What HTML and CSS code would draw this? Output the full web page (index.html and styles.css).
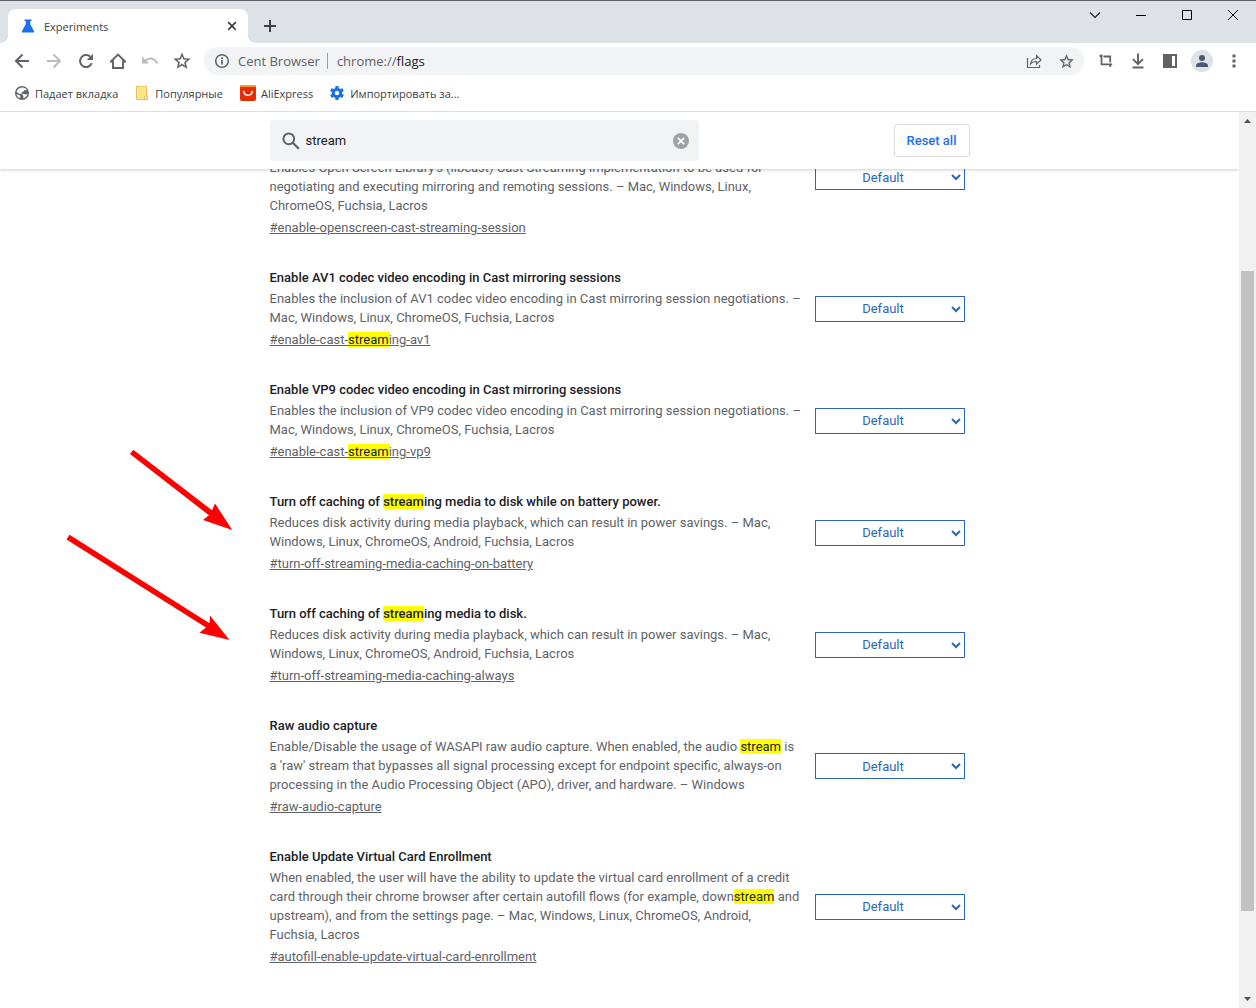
FILE: index.html
```html
<!DOCTYPE html>
<html lang="en">
<head>
  <meta charset="UTF-8"/>
  <meta name="viewport" content="width=device-width,initial-scale=1"/>
  <title>Experiments</title>
  <link rel="stylesheet" href="styles.css">
</head>
<body>
  <div class="tab-strip">
    <div class="tab">
      <svg class="tab-icon" width="14" height="14" viewBox="0 0 14 14"><path d="M3.5 0.500h7v1.500h-1.200v3.200L13 12v1.500H1V12l3.700-6.800V2H3.500z" fill="#1a73e8"/></svg>
      <span class="tab-title">Experiments</span>
      <button class="tab-close" aria-label="Close tab"><svg width="10" height="10" viewBox="0 0 10 10"><path d="M1.200 1.200l7.600 7.600M8.800 1.200L1.200 8.800" stroke="#3c4043" stroke-width="1.700"/></svg></button>
    </div>
    <button class="new-tab" aria-label="New tab"><svg width="14" height="14" viewBox="0 0 14 14"><path d="M7 1v12M1 7h12" stroke="#3c4043" stroke-width="2"/></svg></button>
    <div class="window-controls">
      <button aria-label="Search tabs"><svg width="12" height="12" viewBox="0 0 12 12"><path d="M1 3.500l5 5 5-5" fill="none" stroke="#222" stroke-width="1.200"/></svg></button>
      <button aria-label="Minimize"><svg width="10" height="10" viewBox="0 0 10 10"><path d="M0 5.500h10" stroke="#000"/></svg></button>
      <button aria-label="Maximize"><svg width="10" height="10" viewBox="0 0 10 10"><path d="M.5.5h9v9h-9z" fill="none" stroke="#000"/></svg></button>
      <button aria-label="Close"><svg width="10" height="10" viewBox="0 0 10 10"><path d="M0 0l10 10M10 0L0 10" stroke="#000"/></svg></button>
    </div>
  </div>

  <div class="toolbar">
    <button aria-label="Back"><svg width="16" height="16" viewBox="0 0 16 16"><path d="M15 8H2M8.500 1.500L2 8l6.500 6.500" fill="none" stroke="currentColor" stroke-width="2"/></svg></button>
    <button aria-label="Forward" disabled><svg width="16" height="16" viewBox="0 0 16 16"><path d="M1 8h13M7.500 1.500L14 8l-6.500 6.500" fill="none" stroke="currentColor" stroke-width="2"/></svg></button>
    <button aria-label="Reload"><svg width="16" height="16" viewBox="0 0 16 16"><path d="M13.700 10.200A6 6 0 1 1 12.300 3.800" fill="none" stroke="currentColor" stroke-width="2"/><path d="M15 .800v6.200H8.800z" fill="currentColor"/></svg></button>
    <button aria-label="Home"><svg width="16" height="16" viewBox="0 0 16 16"><path d="M3 15V8.500H.8L8 1.500l7.200 7H13V15z" fill="none" stroke="currentColor" stroke-width="1.900"/></svg></button>
    <button aria-label="Undo" disabled><svg width="18" height="16" viewBox="0 0 18 16"><path d="M1 3.500v7h7z" fill="currentColor"/><path d="M3.500 8.500Q10.500 1.500 16.500 10.500" fill="none" stroke="currentColor" stroke-width="2"/></svg></button>
    <button aria-label="Bookmarks"><svg width="20" height="20" viewBox="0 0 24 24"><path d="M22 9.240l-7.190-.62L12 2 9.190 8.630 2 9.240l5.460 4.730L5.820 21 12 17.270 18.180 21l-1.630-7.030L22 9.240zM12 15.400l-3.760 2.270 1-4.280-3.320-2.880 4.380-.38L12 6.100l1.710 4.040 4.380.38-3.320 2.880 1 4.280L12 15.400z" fill="currentColor" stroke="currentColor" stroke-width=".300"/></svg></button>
    <div class="omnibox">
      <svg class="info" width="16" height="16" viewBox="0 0 16 16"><circle cx="8" cy="8" r="6.300" fill="none" stroke="#5f6368" stroke-width="1.500"/><path d="M8 7v4.500M8 4.200v1.700" stroke="#5f6368" stroke-width="1.700"/></svg>
      <span class="origin">Cent Browser</span>
      <span class="url">chrome://<b>flags</b></span>
      <button aria-label="Share"><svg width="16" height="16" viewBox="0 0 16 16"><path d="M1.500 5v9.500h12V12M4.500 11c.5-4 3-5.500 6-5.500V2.500L15 7l-4.500 4.200V8.500c-2.500 0-4.500.5-6 2.500z" fill="none" stroke="currentColor" stroke-width="1.200"/></svg></button>
      <button aria-label="Bookmark this page"><svg width="17" height="17" viewBox="0 0 24 24"><path d="M22 9.240l-7.190-.62L12 2 9.190 8.630 2 9.240l5.460 4.730L5.820 21 12 17.270 18.180 21l-1.630-7.030L22 9.240zM12 15.400l-3.760 2.270 1-4.280-3.320-2.880 4.380-.38L12 6.100l1.710 4.040 4.380.38-3.320 2.880 1 4.280L12 15.400z" fill="currentColor" stroke="currentColor" stroke-width=".300"/></svg></button>
    </div>
    <button aria-label="Screenshot"><svg width="16" height="16" viewBox="0 0 16 16"><path d="M1.500 3H4M3.500 1.500v9.800h10.700M5.500 3.500h6.700v6M12.200 10.500V14" fill="none" stroke="currentColor" stroke-width="1.800"/></svg></button>
    <button aria-label="Downloads"><svg width="14" height="16" viewBox="0 0 14 16"><path d="M7 .5V11M2 6.200l5 5 5-5M1.500 14.500h11" fill="none" stroke="currentColor" stroke-width="1.900"/></svg></button>
    <button aria-label="Side panel"><svg width="14" height="14" viewBox="0 0 14 14"><path d="M0 0h14v14H0zM9 2v10h3V2z" fill="currentColor" fill-rule="evenodd"/></svg></button>
    <button aria-label="Profile"><svg width="22" height="22" viewBox="0 0 22 22"><circle cx="11" cy="11" r="11" fill="#dee1e6"/><circle cx="11" cy="8" r="3" fill="#4a5872"/><path d="M5 17v-1.500c0-2 4-3.200 6-3.200s6 1.200 6 3.200V17z" fill="#4a5872"/></svg></button>
    <button aria-label="Menu"><svg width="4" height="14" viewBox="0 0 4 14"><path d="M.5.500h3v3h-3zM.5 5.500h3v3h-3zM.5 10.500h3v3h-3z" fill="currentColor"/></svg></button>
  </div>

  <nav class="bookmarks">
    <a href="#"><svg width="14" height="14" viewBox="0 0 14 14"><circle cx="7" cy="7" r="7" fill="#5f6368"/><path d="M7.500 1.500c2 0 3.600 1 4.500 2.700L9.500 4 8.500 5.500 6.500 6l.5 1.500-2 .5-3.500-2C2 3.500 4.500 1.500 7.500 1.500zM1.600 8l3 1.200.8 1.300-.4 1.800C3 11.500 1.800 10 1.600 8zM8 7.500l2.500 1 1.900-.5c-.3 2.200-2 4-4.200 4.400L8.500 10 7.200 8.800z" fill="#fff"/></svg>Падает вкладка</a>
    <a href="#"><svg width="14" height="14" viewBox="0 0 14 14"><path d="M1.500.500h10v9h1v4h-11z" fill="#fde38b" stroke="#e6c35c"/><path d="M9.500 13.500v-3l2-1" fill="none" stroke="#e6c35c"/></svg>Популярные</a>
    <a href="#" class="ali"><svg width="16" height="16" viewBox="0 0 16 16"><rect width="16" height="16" rx="2" fill="#e62e04"/><path d="M0 2a2 2 0 0 1 2-2h12a2 2 0 0 1 2 2z" fill="#ff9a1c"/><path d="M3.800 6.500c.5 5 7.900 5 8.400 0" fill="none" stroke="#fff" stroke-width="1.500" stroke-linecap="round"/></svg>AliExpress</a>
    <a href="#"><svg width="14" height="14" viewBox="0 0 14 14"><circle cx="7" cy="7" r="3.700" fill="none" stroke="#1a73e8" stroke-width="3"/><path d="M7 0v3M7 11v3M.94 3.500l2.600 1.500M10.460 9l2.600 1.500M.94 10.500L3.540 9M10.460 5l2.600-1.500" stroke="#1a73e8" stroke-width="3.200"/></svg>Импортировать за...</a>
  </nav>

  <div class="viewport">
    <main>
      <header>
        <div class="container header-row">
          <div class="search">
            <svg width="18" height="18" viewBox="0 0 18 18"><circle cx="6.800" cy="6.800" r="5.400" fill="none" stroke="#5f6368" stroke-width="2"/><path d="M10.800 10.800l6 6" stroke="#5f6368" stroke-width="2.300"/></svg>
            <input type="text" id="search" value="stream" aria-label="Search flags">
            <button aria-label="Clear search"><svg width="16" height="16" viewBox="0 0 16 16"><circle cx="8" cy="8" r="8" fill="#a0a2a5"/><path d="M4.800 4.800l6.400 6.400M11.200 4.800l-6.400 6.400" stroke="#fff" stroke-width="1.800"/></svg></button>
          </div>
          <button class="reset">Reset all</button>
        </div>
      </header>

      <div class="container experiments">
        <section class="experiment scrolled">
          <div class="flag">
            <p>Enables Open Screen Library's (libcast) Cast Streaming implementation to be used for negotiating and executing mirroring and remoting sessions. – Mac, Windows, Linux, ChromeOS, Fuchsia, Lacros</p>
            <a href="#enable-openscreen-cast-streaming-session">#enable-openscreen-cast-streaming-session</a>
          </div>
          <select aria-label="Open Screen Cast Streaming"><option>Default</option></select>
        </section>

        <section class="experiment">
          <div class="flag">
            <h3 id="av1">Enable AV1 codec video encoding in Cast mirroring sessions</h3>
            <p>Enables the inclusion of AV1 codec video encoding in Cast mirroring session negotiations. – Mac, Windows, Linux, ChromeOS, Fuchsia, Lacros</p>
            <a href="#enable-cast-streaming-av1">#enable-cast-<mark>stream</mark>ing-av1</a>
          </div>
          <select aria-labelledby="av1"><option>Default</option></select>
        </section>

        <section class="experiment">
          <div class="flag">
            <h3 id="vp9">Enable VP9 codec video encoding in Cast mirroring sessions</h3>
            <p>Enables the inclusion of VP9 codec video encoding in Cast mirroring session negotiations. – Mac, Windows, Linux, ChromeOS, Fuchsia, Lacros</p>
            <a href="#enable-cast-streaming-vp9">#enable-cast-<mark>stream</mark>ing-vp9</a>
          </div>
          <select aria-labelledby="vp9"><option>Default</option></select>
        </section>

        <section class="experiment">
          <div class="flag">
            <h3 id="battery">Turn off caching of <mark>stream</mark>ing media to disk while on battery power.</h3>
            <p>Reduces disk activity during media playback, which can result in power savings. – Mac, Windows, Linux, ChromeOS, Android, Fuchsia, Lacros</p>
            <a href="#turn-off-streaming-media-caching-on-battery">#turn-off-streaming-media-caching-on-battery</a>
          </div>
          <select aria-labelledby="battery"><option>Default</option></select>
        </section>

        <section class="experiment">
          <div class="flag">
            <h3 id="always">Turn off caching of <mark>stream</mark>ing media to disk.</h3>
            <p>Reduces disk activity during media playback, which can result in power savings. – Mac, Windows, Linux, ChromeOS, Android, Fuchsia, Lacros</p>
            <a href="#turn-off-streaming-media-caching-always">#turn-off-streaming-media-caching-always</a>
          </div>
          <select aria-labelledby="always"><option>Default</option></select>
        </section>

        <section class="experiment">
          <div class="flag">
            <h3 id="raw">Raw audio capture</h3>
            <p>Enable/Disable the usage of WASAPI raw audio capture. When enabled, the audio <mark>stream</mark> is a 'raw' stream that bypasses all signal processing except for endpoint specific, always-on processing in the Audio Processing Object (APO), driver, and hardware. – Windows</p>
            <a href="#raw-audio-capture">#raw-audio-capture</a>
          </div>
          <select aria-labelledby="raw"><option>Default</option></select>
        </section>

        <section class="experiment">
          <div class="flag">
            <h3 id="card">Enable Update Virtual Card Enrollment</h3>
            <p>When enabled, the user will have the ability to update the virtual card enrollment of a credit card through their chrome browser after certain autofill flows (for example, down<mark>stream</mark> and upstream), and from the settings page. – Mac, Windows, Linux, ChromeOS, Android, Fuchsia, Lacros</p>
            <a href="#autofill-enable-update-virtual-card-enrollment">#autofill-enable-update-virtual-card-enrollment</a>
          </div>
          <select aria-labelledby="card"><option>Default</option></select>
        </section>

        <!-- red pointers next to the two caching flags -->
        <svg class="arrows" width="180" height="200" viewBox="0 0 180 200">
          <g fill="#fe0000">
            <path d="M73.300 9.800L152 70.300 155 63.500 172.300 90 143 80 149 75.300 70 14z"/>
            <path d="M9.500 94.800L149.500 183.200 150 175.500 169.500 200 139.500 192.800 146 187.500 6.500 99.500z"/>
          </g>
        </svg>
      </div>
    </main>

    <div class="scrollbar">
      <svg width="17" height="17" viewBox="0 0 17 17"><path d="M5 11h7L8.500 7z" fill="#505050"/></svg>
      <div class="before"></div>
      <div class="thumb"></div>
      <div class="after"></div>
      <svg width="17" height="17" viewBox="0 0 17 17"><path d="M5 6h7l-3.500 4z" fill="#505050"/></svg>
    </div>
  </div>
</body>
</html>
```
FILE: styles.css
```css
:root {
  --text: #202124;
  --text-light: #5f6368;
  --primary: #1a73e8;
  --select: #2a66b8;
  --strip: #dee1e6;
  --field: #f1f3f4;
  --border: #dadce0;
}

* {
  box-sizing: border-box;
  margin: 0;
  padding: 0;
}

body {
  display: flex;
  flex-direction: column;
  height: 100vh;
  overflow: hidden;
  background: #fff;
  color: var(--text);
  font-family: Roboto, sans-serif;
  font-size: 13px;
  line-height: 19px;
}

button {
  display: flex;
  align-items: center;
  justify-content: center;
  border: none;
  background: none;
  color: var(--text-light);
  font: inherit;
}

button:disabled {
  color: #babcbe;
}

svg {
  flex: none;
}

/* browser chrome */
.tab-strip,
.toolbar,
.bookmarks {
  display: flex;
  flex: none;
  font-family: "Open Sans", "Noto Sans", sans-serif;
  font-size: 11px;
}

.tab-strip {
  height: 43px;
  padding-left: 8px;
  background: var(--strip);
  border-top: 1px solid #606067;
}

.tab {
  position: relative;
  display: flex;
  align-items: center;
  width: 240px;
  margin-top: 8px;
  padding: 0 10px 0 13px;
  background: #fff;
  border-radius: 8px 8px 0 0;
  color: #3c4043;
}

.tab::before,
.tab::after {
  content: "";
  position: absolute;
  bottom: 0;
  width: 8px;
  height: 8px;
}

.tab::before {
  left: -8px;
  background: radial-gradient(circle at 0 0, transparent 8px, #fff 8px);
}

.tab::after {
  right: -8px;
  background: radial-gradient(circle at 100% 0, transparent 8px, #fff 8px);
}

.tab-title {
  flex: 1;
  margin-left: 9px;
}

.tab-close {
  width: 12px;
  height: 16px;
}

.new-tab {
  width: 28px;
  margin: 8px 0 0 8px;
}

.window-controls {
  display: flex;
  margin-left: auto;
}

.window-controls button {
  width: 46px;
  height: 28px;
}

.toolbar {
  align-items: center;
  height: 36px;
  padding: 0 6px;
}

.toolbar button {
  flex: none;
  width: 32px;
  height: 28px;
}

.omnibox {
  display: flex;
  flex: 1;
  align-items: center;
  height: 28px;
  margin: 0 6px;
  padding: 0 2px 0 10px;
  border-radius: 14px;
  background: var(--field);
  color: var(--text-light);
  font-size: 13px;
}

.origin {
  margin-left: 8px;
  padding-right: 7px;
  border-right: 1px solid #9aa0a6;
  line-height: 16px;
}

.url {
  flex: 1;
  margin-left: 9px;
}

.url b {
  color: var(--text);
  font-weight: 400;
}

.bookmarks {
  align-items: center;
  gap: 17px;
  height: 33px;
  padding: 0 15px 4px;
  border-bottom: 1px solid var(--border);
}

.bookmarks a {
  display: flex;
  align-items: center;
  gap: 6px;
  color: #3c4043;
  text-decoration: none;
}

.bookmarks .ali {
  gap: 5px;
}

/* flags page */
.viewport {
  display: flex;
  flex: 1;
  min-height: 0;
}

main {
  flex: 1;
  overflow: hidden;
}

.container {
  width: 100%;
  max-width: 700px;
  margin: 0 auto;
}

header {
  position: relative;
  z-index: 1;
  padding: 8px 0;
  background: #fff;
  box-shadow: 0 1px 3px rgba(0, 0, 0, .2);
}

.header-row {
  display: flex;
  align-items: center;
  justify-content: space-between;
}

.search {
  display: flex;
  align-items: center;
  width: 429px;
  height: 41px;
  padding: 0 10px 0 12px;
  border-radius: 3px;
  background: var(--field);
}

.search input {
  flex: 1;
  margin-left: 6px;
  border: none;
  outline: none;
  background: none;
  color: var(--text);
  font: inherit;
}

.reset {
  width: 76px;
  height: 33px;
  border: 1px solid var(--border);
  border-radius: 3px;
  color: var(--primary);
  font-weight: 500;
}

.experiments {
  position: relative;
  display: flex;
  flex-direction: column;
  gap: 31px;
  margin-top: -52px;
  padding-bottom: 30px;
}

.experiment {
  display: flex;
  align-items: center;
  justify-content: space-between;
  padding-right: 5px;
}

.flag {
  width: 532px;
}

/* top of this one is under the header */
.scrolled .flag {
  padding-top: 41px;
}

.flag h3 {
  margin-bottom: 2px;
  font-size: 13px;
  font-weight: 500;
}

.flag p {
  margin-bottom: 3px;
  color: var(--text-light);
}

.flag a {
  display: block;
  color: var(--text-light);
}

mark {
  background: #ff0;
  color: var(--text);
}

select {
  width: 150px;
  height: 26px;
  padding-right: 1px;
  border: 1px solid var(--select);
  background: #fff;
  color: var(--select);
  font: inherit;
  text-align: center;
}

.arrows {
  position: absolute;
  top: 323px;
  left: -210px;
}

.scrollbar {
  display: flex;
  flex-direction: column;
  width: 17px;
  background: #f1f1f1;
}

.before {
  flex: 142;
}

.thumb {
  flex: 640;
  margin: 0 2px;
  background: #c1c1c1;
}

.after {
  flex: 80;
}
```
